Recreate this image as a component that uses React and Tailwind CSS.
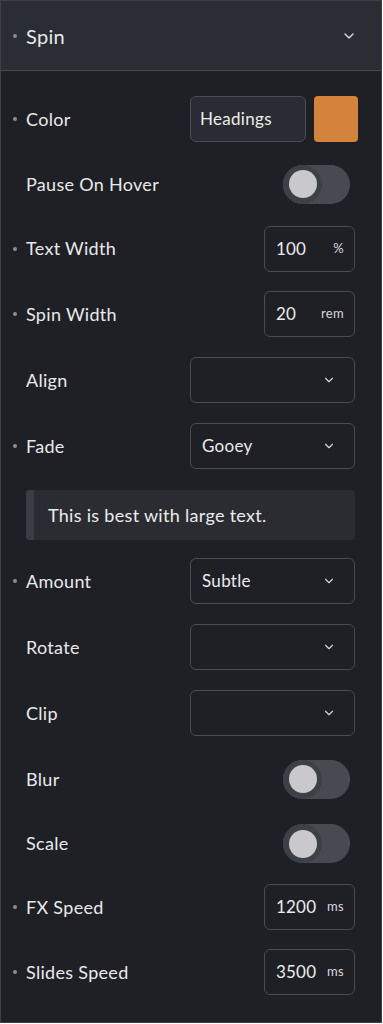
import React from "react";

const Chevron = ({ className = "" }) => (
    <svg viewBox="0 0 24 24" className={className} fill="none" stroke="currentColor" strokeWidth="2" strokeLinecap="round" strokeLinejoin="round">
        <path d="M6 9l6 6 6-6" />
    </svg>
);

const Label = ({ dot, children }) => (
    <div className="flex items-center">
        <span className="w-[25px] flex justify-start pl-[12px]">
            {dot && <span className="w-[4px] h-[4px] rounded-full bg-[#8b8d93]" />}
        </span>
        <span className="text-[18px] tracking-[0.3px] text-[#e9e9ea]">{children}</span>
    </div>
);

const Row = ({ dot, label, children, h = "h-[66px]" }) => (
    <div className={`flex items-center justify-between pr-[26px] ${h}`}>
        <Label dot={dot}>{label}</Label>
        {children}
    </div>
);

const Toggle = () => (
    <div className="w-[67px] h-[39px] rounded-full bg-[#484a52] flex items-center pl-[5px]">
        <div className="w-[39px] h-[39px] -ml-[5px] rounded-full bg-[#3e4047] flex items-center justify-center">
            <div className="w-[28px] h-[28px] rounded-full bg-[#c9c9cb]" />
        </div>
    </div>
);

const Unit = ({ value, unit }) => (
    <div className="w-[91px] h-[46px] rounded-[6px] border border-[#4a4c53] flex items-center justify-between pl-[11px] pr-[10px]">
        <span className="text-[17px] tracking-[0.2px] text-[#ececec]">{value}</span>
        <span className="text-[13px] tracking-[0.3px] text-[#d8d8da]">{unit}</span>
    </div>
);

const Select = ({ value }) => (
    <div className="w-[165px] h-[46px] rounded-[6px] border border-[#4a4c53] flex items-center justify-between pl-[11px] pr-[18px]">
        <span className="text-[17px] tracking-[0.3px] text-[#ececec]">{value}</span>
        <Chevron className="w-[14px] h-[14px] text-[#d5d5d7]" />
    </div>
);

export default function App() {
    return (
        <div className="w-[382px] h-[1023px] bg-[#1f2026] border border-[#3d4047] flex flex-col" style={{ fontFamily: "Lato, 'Noto Sans', sans-serif" }}>
            {/* Header */}
            <div className="h-[70px] bg-[#2b2d35] border-b border-[#474a52] flex items-center justify-between pr-[24px] shrink-0">
                <Label dot>
                    <span className="text-[20px]">Spin</span>
                </Label>
                <Chevron className="w-[16px] h-[16px] text-[#e0e0e2]" />
            </div>

            <div className="flex flex-col pt-[15px]">
                <Row dot label="Color">
                    <div className="flex gap-[8px] -mr-[3px]">
                        <div className="w-[116px] h-[46px] rounded-[6px] border border-[#4a4c53] bg-[#2a2c33] flex items-center pl-[9px]">
                            <span className="text-[17px] tracking-[0.3px] text-[#ececec]">Headings</span>
                        </div>
                        <div className="w-[44px] h-[46px] rounded-[4px] bg-[#d4833d]" />
                    </div>
                </Row>
                <Row label="Pause On Hover" h="h-[64px]">
                    <div className="mr-[5px]"><Toggle /></div>
                </Row>
                <Row dot label="Text Width" h="h-[65px]">
                    <Unit value="100" unit="%" />
                </Row>
                <Row dot label="Spin Width">
                    <Unit value="20" unit="rem" />
                </Row>
                <Row label="Align">
                    <Select value="" />
                </Row>
                <Row dot label="Fade">
                    <Select value="Gooey" />
                </Row>

                <div className="pl-[25px] pr-[26px] pt-[11px] pb-[8px]">
                    <div className="h-[50px] rounded-[4px] bg-[#2a2c32] flex items-stretch overflow-hidden">
                        <div className="w-[8px] bg-[#3b3d44]" />
                        <div className="flex items-center pl-[14px] text-[18px] tracking-[0.3px] text-[#ececec]">This is best with large text.</div>
                    </div>
                </div>

                <Row dot label="Amount">
                    <Select value="Subtle" />
                </Row>
                <Row label="Rotate">
                    <Select value="" />
                </Row>
                <Row label="Clip">
                    <Select value="" />
                </Row>
                <Row label="Blur">
                    <div className="mr-[5px]"><Toggle /></div>
                </Row>
                <Row label="Scale" h="h-[63px]">
                    <div className="mr-[5px]"><Toggle /></div>
                </Row>
                <Row dot label="FX Speed" h="h-[64px]">
                    <Unit value="1200" unit="ms" />
                </Row>
                <Row dot label="Slides Speed">
                    <Unit value="3500" unit="ms" />
                </Row>
            </div>
        </div>
    );
}
